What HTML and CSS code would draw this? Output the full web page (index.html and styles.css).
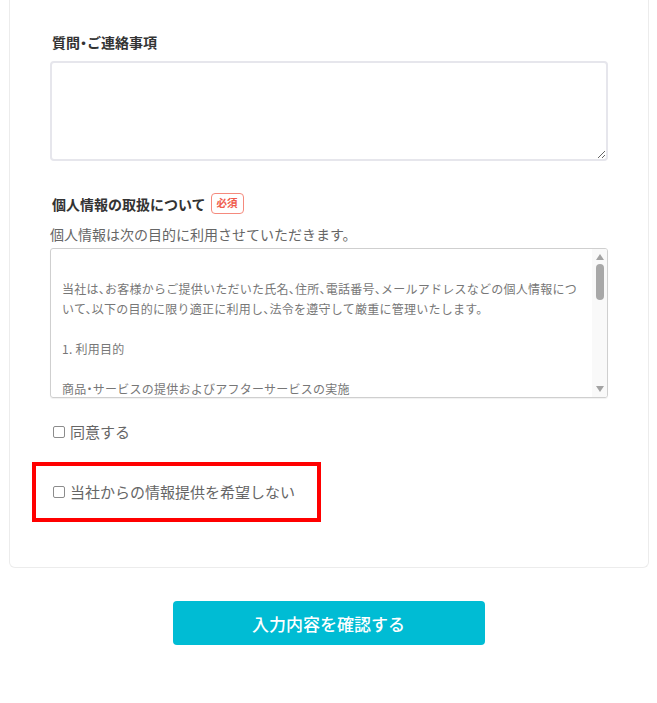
FILE: index.html
```html
<!DOCTYPE html>
<html lang="ja">
<head>
<meta charset="utf-8">
<title>お問い合わせ</title>
<link rel="stylesheet" href="styles.css">
</head>
<body>
<main class="page">
  <form class="card">
    <div class="field">
      <label class="label" for="msg">質問・ご連絡事項</label>
      <textarea id="msg" class="textarea"></textarea>
    </div>

    <div class="field field-privacy">
      <div class="label-row">
        <span class="label">個人情報の取扱について</span>
        <span class="badge">必須</span>
      </div>
      <p class="note">個人情報は次の目的に利用させていただきます。</p>
      <div class="policy">
        <div class="policy-text">
          <p>当社は、お客様からご提供いただいた氏名、住所、電話番号、メールアドレスなどの個人情報につ<br>いて、以下の目的に限り適正に利用し、法令を遵守して厳重に管理いたします。</p>
          <p>1. 利用目的</p>
          <p>商品・サービスの提供およびアフターサービスの実施</p>
          <p>お問い合わせへの対応</p>
          <p>新商品・サービスに関する情報のご案内</p>
          <p>2. 第三者提供</p>
          <p>当社は、法令に基づく場合を除き、ご本人の同意なく個人情報を第三者に<br>提供いたしません。</p>
        </div>
        <div class="scrollbar" aria-hidden="true">
          <span class="sb-btn"><span class="arrow-up"></span></span>
          <span class="sb-track"><span class="sb-thumb"></span></span>
          <span class="sb-btn sb-btn-down"><span class="arrow-down"></span></span>
        </div>
      </div>
    </div>

    <label class="check check-agree">
      <input type="checkbox"><span>同意する</span>
    </label>

    <div class="highlight">
      <label class="check check-optout">
        <input type="checkbox"><span>当社からの情報提供を希望しない</span>
      </label>
    </div>
  </form>

  <div class="actions">
    <button type="button" class="submit">入力内容を確認する</button>
  </div>
</main>
</body>
</html>
```

FILE: styles.css
```css
html, body {
  margin: 0;
  padding: 0;
  background: #ffffff;
}

body {
  font-family: "Noto Sans CJK JP", "Noto Sans", sans-serif;
  font-feature-settings: "halt";
  color: #333333;
}

.page {
  width: 657px;
}

.card {
  box-sizing: border-box;
  width: 640px;
  margin-left: 9px;
  border: 1px solid #ececec;
  border-top: none;
  border-radius: 0 0 6px 6px;
  padding: 32px 40px 64px;
  display: flex;
  flex-direction: column;
}

.field {
  display: flex;
  flex-direction: column;
}

.label {
  display: block;
  font-size: 14px;
  line-height: 20px;
  font-weight: 700;
  color: #333333;
  padding-left: 2px;
}

.field > .label {
  margin-bottom: 9px;
}

.textarea {
  box-sizing: border-box;
  width: 100%;
  height: 100px;
  margin: 0;
  border: 2px solid #e6e6ec;
  border-radius: 4px;
  background: #ffffff;
  font-family: inherit;
  font-size: 14px;
  padding: 8px 10px;
  display: block;
}

.field-privacy {
  margin-top: 32px;
}

.label-row {
  display: flex;
  align-items: center;
  gap: 5px;
  height: 21px;
}

.badge {
  box-sizing: border-box;
  height: 21px;
  padding: 0 5px;
  border: 1.5px solid #f58a7d;
  border-radius: 4px;
  color: #ef5b4c;
  font-size: 10.5px;
  font-weight: 700;
  line-height: 18px;
}

.note {
  margin: 10px 0 4px;
  font-size: 14px;
  line-height: 20px;
  color: #666666;
}

.policy {
  box-sizing: border-box;
  height: 150px;
  display: flex;
  overflow: hidden;
  border: 1px solid #cfcfcf;
  border-radius: 3px;
  box-shadow: 0 1px 1px rgba(0, 0, 0, 0.06);
}

.policy-text {
  flex: 1;
  min-width: 0;
  overflow: hidden;
  padding: 30px 11px 0;
  font-size: 12px;
  line-height: 20px;
  color: #777777;
  letter-spacing: 0.25px;
}

.policy-text p {
  margin: 0;
  white-space: nowrap;
}

.policy-text p + p {
  margin-top: 20px;
}

.scrollbar {
  width: 15px;
  flex: none;
  display: flex;
  flex-direction: column;
  background: #f9f9f9;
}

.sb-btn {
  height: 15px;
  flex: none;
  display: flex;
  justify-content: center;
  padding-top: 5px;
  box-sizing: border-box;
}

.sb-btn-down {
  padding-top: 4px;
}

.arrow-up {
  width: 0;
  height: 0;
  border-left: 4px solid transparent;
  border-right: 4px solid transparent;
  border-bottom: 6px solid #a3a3a3;
}

.arrow-down {
  width: 0;
  height: 0;
  border-left: 4px solid transparent;
  border-right: 4px solid transparent;
  border-top: 6px solid #a3a3a3;
}

.sb-track {
  flex: 1;
  display: flex;
  justify-content: center;
  padding-left: 1px;
}

.sb-thumb {
  width: 8px;
  height: 36px;
  border-radius: 4px;
  background: #a8a8a8;
}

.check {
  display: flex;
  align-items: center;
  font-size: 15px;
  line-height: 22px;
  color: #666666;
}

.check input {
  appearance: none;
  -webkit-appearance: none;
  box-sizing: border-box;
  width: 12px;
  height: 12px;
  margin: 0 5px 0 3px;
  border: 1.3px solid #8c8c8c;
  border-radius: 2px;
  background: #ffffff;
  flex: none;
}

.check-agree {
  margin-top: 23px;
}

.highlight {
  position: relative;
  margin-top: 38px;
}

.highlight::after {
  content: "";
  position: absolute;
  left: -18px;
  top: -19px;
  width: 289px;
  height: 60px;
  box-sizing: border-box;
  border: 4px solid #ff0000;
  pointer-events: none;
}

.actions {
  display: flex;
  justify-content: center;
  padding-top: 33px;
}

.submit {
  width: 312px;
  height: 44px;
  border: none;
  border-radius: 4px;
  background: #00bcd4;
  color: #ffffff;
  font-family: inherit;
  font-size: 17px;
  font-weight: 500;
  cursor: pointer;
}
```
